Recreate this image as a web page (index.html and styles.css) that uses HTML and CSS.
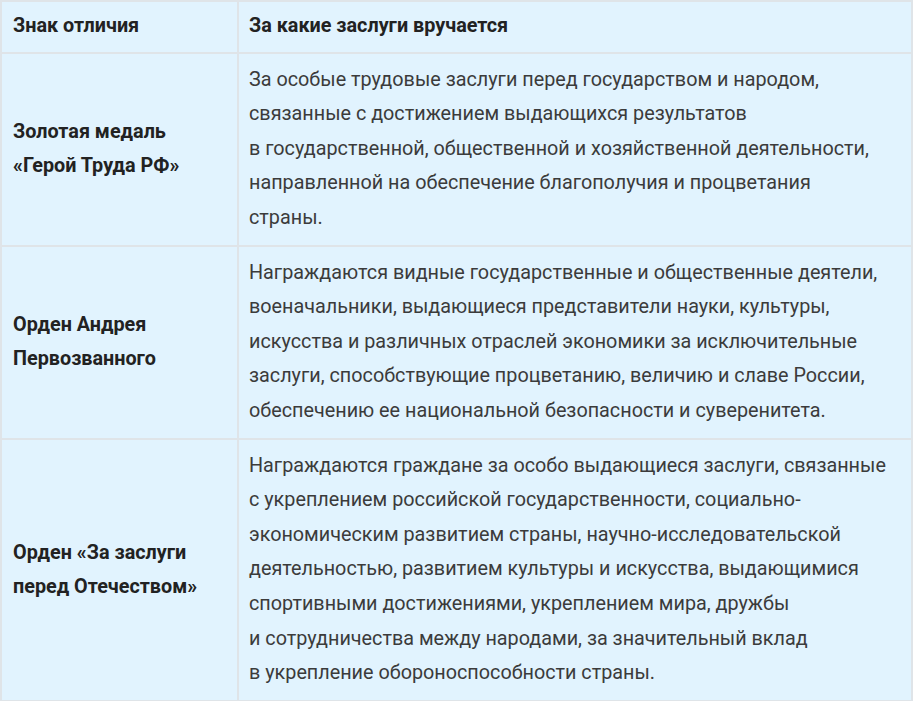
FILE: index.html
```html
<!DOCTYPE html>
<html lang="ru">
<head>
<meta charset="utf-8">
<link rel="stylesheet" href="styles.css">
</head>
<body>
<table class="awards">
  <thead>
    <tr>
      <th class="col-name">Знак отличия</th>
      <th class="col-desc">За какие заслуги вручается</th>
    </tr>
  </thead>
  <tbody>
    <tr>
      <td class="name">Золотая медаль<br>«Герой Труда РФ»</td>
      <td class="desc">За особые трудовые заслуги перед государством и народом,<br>связанные с достижением выдающихся результатов<br>в государственной, общественной и хозяйственной деятельности,<br>направленной на обеспечение благополучия и процветания<br>страны.</td>
    </tr>
    <tr>
      <td class="name">Орден Андрея<br>Первозванного</td>
      <td class="desc">Награждаются видные государственные и общественные деятели,<br>военачальники, выдающиеся представители науки, культуры,<br>искусства и различных отраслей экономики за исключительные<br>заслуги, способствующие процветанию, величию и славе России,<br>обеспечению ее национальной безопасности и суверенитета.</td>
    </tr>
    <tr>
      <td class="name">Орден «За заслуги<br>перед Отечеством»</td>
      <td class="desc">Награждаются граждане за особо выдающиеся заслуги, связанные<br>с укреплением российской государственности, социально-<br>экономическим развитием страны, научно-исследовательской<br>деятельностью, развитием культуры и искусства, выдающимися<br>спортивными достижениями, укреплением мира, дружбы<br>и сотрудничества между народами, за значительный вклад<br>в укрепление обороноспособности страны.</td>
    </tr>
  </tbody>
</table>
</body>
</html>
```

FILE: styles.css
```css
html, body {
  margin: 0;
  padding: 0;
  background: #ffffff;
}

.awards {
  width: 913px;
  table-layout: fixed;
  border-collapse: collapse;
  background: #e1f3fe;
  font-family: Roboto, "Liberation Sans", Arial, sans-serif;
  font-size: 19.8px;
  color: #3b3b3b;
}

.awards th,
.awards td {
  border: 2px solid #dfe4e8;
  text-align: left;
  padding: 9px 10px 9px 11px;
  line-height: 34.6px;
}

.awards th {
  font-weight: 700;
  color: #222222;
  padding-top: 7px;
  padding-bottom: 8px;
}

.col-name {
  width: 214px;
}

.awards th.col-desc,
.awards td.desc {
  padding-left: 10px;
}

.awards td.name {
  font-weight: 700;
  color: #222222;
  vertical-align: middle;
  line-height: 34px;
}

.awards td.desc {
  vertical-align: top;
  white-space: nowrap;
}
```
